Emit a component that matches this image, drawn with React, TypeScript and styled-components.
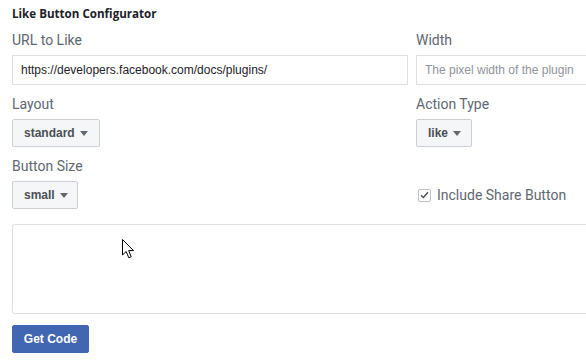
import React from "react";
import styled, { createGlobalStyle } from "styled-components";

const Global = createGlobalStyle`
  html, body { margin: 0; padding: 0; background: #fff; overflow: hidden; }
  body { font-family: "Liberation Sans", Arial, sans-serif; }
`;

const Page = styled.div`
  position: relative;
  width: 640px;
  padding: 4px 0 0 12px;
  box-sizing: border-box;
`;

const Title = styled.div`
  font-family: "Open Sans", "Liberation Sans", Arial, sans-serif;
  font-weight: bold;
  font-size: 11.6px;
  color: #1d2129;
  line-height: 20px;
  height: 20px;
  margin-bottom: 6px;
`;

const Grid = styled.div`
  display: grid;
  grid-template-columns: 396px 200px;
  column-gap: 8px;
  row-gap: 9px;
`;

const Field = styled.div`
  display: flex;
  flex-direction: column;
`;

const Label = styled.div`
  font-family: Roboto, "Liberation Sans", sans-serif;
  font-size: 14px;
  color: #606770;
  line-height: 20px;
  height: 20px;
  margin-bottom: 5px;
`;

const TextInput = styled.input<{ $w: number }>`
  box-sizing: border-box;
  height: 30px;
  width: ${(p) => p.$w}px;
  border: 1px solid #dddfe2;
  border-radius: 0;
  padding: 0 8px;
  font-family: "Liberation Sans", Arial, sans-serif;
  font-size: 12px;
  color: #1d2129;
  outline: none;
  &::placeholder { color: #90949c; }
`;

const Select = styled.div<{ $w: number }>`
  box-sizing: border-box;
  height: 28px;
  width: ${(p) => p.$w}px;
  display: flex;
  align-items: center;
  gap: 5px;
  padding-left: 11px;
  background: #f5f6f7;
  border: 1px solid #ccd0d5;
  border-radius: 2px;
  font-family: "Liberation Sans", Arial, sans-serif;
  font-weight: bold;
  font-size: 12px;
  color: #4b4f56;
`;

const Caret = styled.span`
  width: 0;
  height: 0;
  border-left: 4px solid transparent;
  border-right: 4px solid transparent;
  border-top: 5px solid #606770;
  margin-top: 1px;
`;

const CheckRow = styled.label`
  height: 28px;
  display: flex;
  align-items: center;
  gap: 6px;
  padding-left: 2px;
  font-family: Roboto, "Liberation Sans", sans-serif;
  font-size: 14px;
  color: #606770;
`;

const Box = styled.span`
  box-sizing: border-box;
  width: 13px;
  height: 13px;
  border: 1px solid #bec3c9;
  border-radius: 2px;
  background: #fff;
  display: flex;
  align-items: center;
  justify-content: center;
`;

const Preview = styled.div`
  box-sizing: border-box;
  margin-top: 15px;
  width: 620px;
  height: 90px;
  border: 1px solid #dddfe2;
  border-radius: 3px;
`;

const Button = styled.button`
  margin-top: 11px;
  box-sizing: border-box;
  width: 77px;
  height: 28px;
  border: 1px solid #4267b2;
  border-radius: 2px;
  background: #4267b2;
  color: #fff;
  font-family: "Liberation Sans", Arial, sans-serif;
  font-weight: bold;
  font-size: 12px;
  padding: 0;
`;

const Cursor = styled.svg`
  position: absolute;
  left: 122px;
  top: 239px;
`;

export default function App() {
  return (
    <Page>
      <Global />
      <Title>Like Button Configurator</Title>
      <Grid>
        <Field>
          <Label>URL to Like</Label>
          <TextInput $w={396} defaultValue="https://developers.facebook.com/docs/plugins/" />
        </Field>
        <Field>
          <Label>Width</Label>
          <TextInput $w={200} placeholder="The pixel width of the plugin" />
        </Field>
        <Field>
          <Label>Layout</Label>
          <Select $w={88}>standard<Caret /></Select>
        </Field>
        <Field>
          <Label>Action Type</Label>
          <Select $w={56}>like<Caret /></Select>
        </Field>
        <Field>
          <Label>Button Size</Label>
          <Select $w={66}>small<Caret /></Select>
        </Field>
        <Field>
          <Label />
          <CheckRow>
            <Box>
              <svg width="9" height="8" viewBox="0 0 9 8">
                <path d="M1 4.2 L3.4 6.5 L8 1.3" fill="none" stroke="#4b4f56" strokeWidth="1.5" />
              </svg>
            </Box>
            Include Share Button
          </CheckRow>
        </Field>
      </Grid>
      <Preview />
      <Button>Get Code</Button>
      <Cursor width="14" height="21" viewBox="0 0 14 21">
        <path d="M0.5 0.5 L0.5 16 L4.2 12.5 L6.8 18.8 L9.2 17.8 L6.7 11.6 L11.5 11.6 Z" fill="#fff" stroke="#000" strokeWidth="1" strokeLinejoin="miter" />
      </Cursor>
    </Page>
  );
}
